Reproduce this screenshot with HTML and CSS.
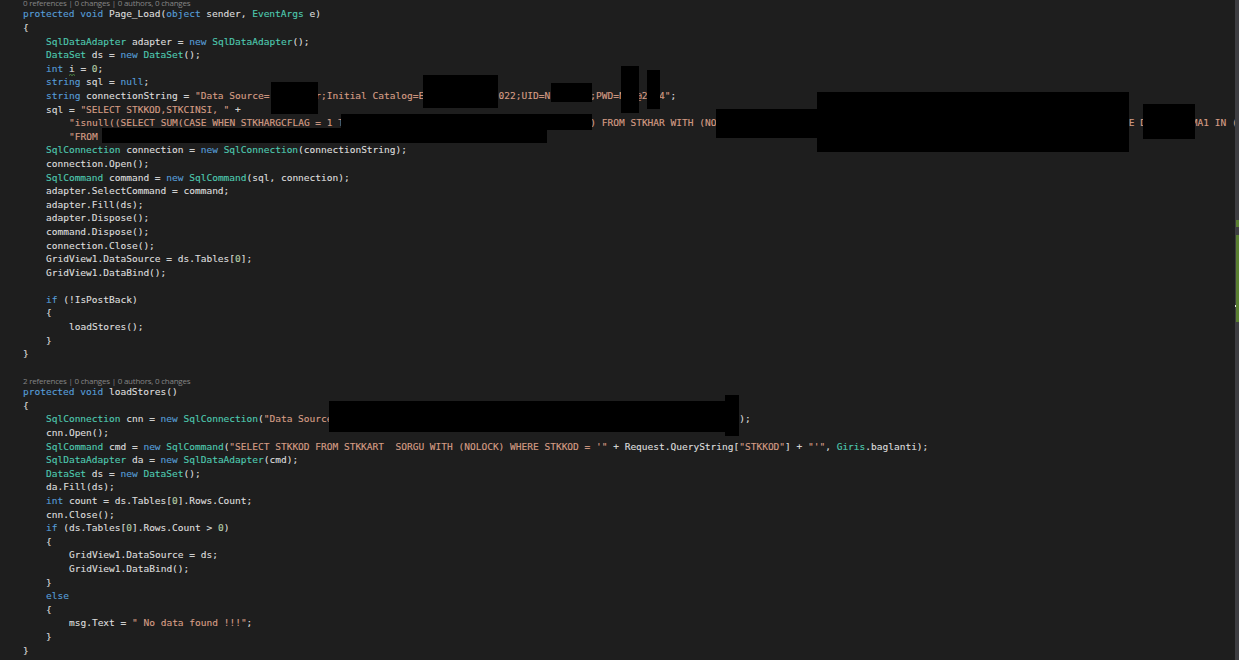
FILE: index.html
```html
<!DOCTYPE html>
<html lang="en">
<head>
<meta charset="utf-8">
<title>Code editor</title>
<link rel="stylesheet" href="styles.css">
</head>
<body>
<main class="window">
<div class="editor">
<div class="lens lens-top">0 references | 0 changes | 0 authors, 0 changes</div>
<div class="ln"><span class="k">protected</span> <span class="k">void</span> Page_Load(<span class="k">object</span> sender, <span class="t">EventArgs</span> e)</div>
<div class="ln">{</div>
<div class="ln i1"><span class="t">SqlDataAdapter</span> adapter = <span class="k">new</span> <span class="t">SqlDataAdapter</span>();</div>
<div class="ln i1"><span class="t">DataSet</span> ds = <span class="k">new</span> <span class="t">DataSet</span>();</div>
<div class="ln i1"><span class="k">int</span> <span class="sq">i<svg class="squiggle" viewBox="0 0 6 2" aria-hidden="true"><path d="M0 1.5 1.5 .5 3 1.5 4.5 .5 6 1.5"/></svg></span> = <span class="n">0</span>;</div>
<div class="ln i1"><span class="k">string</span> sql = <span class="k">null</span>;</div>
<div class="ln i1"><span class="k">string</span> connectionString = <span class="s">"Data Source=        r;Initial Catalog=E             022;UID=N       ;PWD=N  @2  4"</span>;</div>
<div class="ln i1">sql = <span class="s">"SELECT STKKOD,STKCINSI, "</span> +</div>
<div class="ln i2"><span class="s">"isnull((SELECT SUM(CASE WHEN STKHARGCFLAG = 1 T</span><span class="gap g43"></span><span class="s">) FROM STKHAR WITH (NO</span><span class="gap g72"></span><span class="s">E D</span><span class="gap g8"></span><span class="s">MA1 IN (</span></div>
<div class="ln i2"><span class="s">"FROM</span></div>
<div class="ln i1"><span class="t">SqlConnection</span> connection = <span class="k">new</span> <span class="t">SqlConnection</span>(connectionString);</div>
<div class="ln i1">connection.Open();</div>
<div class="ln i1"><span class="t">SqlCommand</span> command = <span class="k">new</span> <span class="t">SqlCommand</span>(sql, connection);</div>
<div class="ln i1">adapter.SelectCommand = command;</div>
<div class="ln i1">adapter.Fill(ds);</div>
<div class="ln i1">adapter.Dispose();</div>
<div class="ln i1">command.Dispose();</div>
<div class="ln i1">connection.Close();</div>
<div class="ln i1">GridView1.DataSource = ds.Tables[<span class="n">0</span>];</div>
<div class="ln i1">GridView1.DataBind();</div>
<div class="ln"> </div>
<div class="ln i1"><span class="k">if</span> (!IsPostBack)</div>
<div class="ln i1">{</div>
<div class="ln i2">loadStores();</div>
<div class="ln i1">}</div>
<div class="ln">}</div>
<div class="ln"> </div>
<div class="lens">2 references | 0 changes | 0 authors, 0 changes</div>
<div class="ln"><span class="k">protected</span> <span class="k">void</span> loadStores()</div>
<div class="ln">{</div>
<div class="ln i1"><span class="t">SqlConnection</span> cnn = <span class="k">new</span> <span class="t">SqlConnection</span>(<span class="s">"Data Source</span><span class="gap g71"></span>);</div>
<div class="ln i1">cnn.Open();</div>
<div class="ln i1"><span class="t">SqlCommand</span> cmd = <span class="k">new</span> <span class="t">SqlCommand</span>(<span class="s">"SELECT STKKOD FROM STKKART  SORGU WITH (NOLOCK) WHERE STKKOD = '"</span> + Request.QueryString[<span class="s">"STKKOD"</span>] + <span class="s">"'"</span>, <span class="t">Giris</span>.baglanti);</div>
<div class="ln i1"><span class="t">SqlDataAdapter</span> da = <span class="k">new</span> <span class="t">SqlDataAdapter</span>(cmd);</div>
<div class="ln i1"><span class="t">DataSet</span> ds = <span class="k">new</span> <span class="t">DataSet</span>();</div>
<div class="ln i1">da.Fill(ds);</div>
<div class="ln i1"><span class="k">int</span> count = ds.Tables[<span class="n">0</span>].Rows.Count;</div>
<div class="ln i1">cnn.Close();</div>
<div class="ln i1"><span class="k">if</span> (ds.Tables[<span class="n">0</span>].Rows.Count &gt; <span class="n">0</span>)</div>
<div class="ln i1">{</div>
<div class="ln i2">GridView1.DataSource = ds;</div>
<div class="ln i2">GridView1.DataBind();</div>
<div class="ln i1">}</div>
<div class="ln i1"><span class="k">else</span></div>
<div class="ln i1">{</div>
<div class="ln i2">msg.Text = <span class="s">" No data found !!!"</span>;</div>
<div class="ln i1">}</div>
<div class="ln">}</div>
</div>
<aside class="scrollbar">
<span class="mark mark-a"></span>
<span class="mark mark-b"></span>
<span class="tick"></span>
</aside>
<span class="redact r1"></span>
<span class="redact r2"></span>
<span class="redact r3"></span>
<span class="redact r4"></span>
<span class="redact r5"></span>
<span class="redact r6"></span>
<span class="redact r7"></span>
<span class="redact r8"></span>
<span class="redact r9"></span>
<span class="redact r10"></span>
<span class="redact r11"></span>
<span class="redact r12"></span>
</main>
</body>
</html>
```
FILE: styles.css
```css
html, body {
  margin: 0;
  padding: 0;
  height: 100%;
  background: #1e1e1e;
}

.window {
  position: relative;
  display: flex;
  width: 1239px;
  height: 660px;
  overflow: hidden;
  background: #1e1e1e;
}

.editor {
  flex: 1;
  min-width: 0;
  margin-top: -3.4px;
  padding-left: 23px;
  overflow: hidden;
  font-family: "DejaVu Sans Mono", monospace;
  font-size: 9.52px;
  color: #dcdcdc;
  -webkit-text-stroke: 0.12px currentColor;
}

.ln {
  height: 13.6px;
  line-height: 13.6px;
  white-space: pre;
}

.i1 { padding-left: 23px; }
.i2 { padding-left: 46px; }

.k { color: #569cd6; }
.t { color: #4ec9b0; }
.s { color: #d69d85; }
.n { color: #b5cea8; }

.gap { display: inline-block; }
.g8 { width: 8ch; }
.g43 { width: 43ch; }
.g71 { width: 71ch; }
.g72 { width: 72ch; }

.sq {
  position: relative;
}

.squiggle {
  position: absolute;
  left: 0;
  top: 100%;
  width: 6px;
  height: 2px;
  overflow: visible;
}

.squiggle path {
  fill: none;
  stroke: #57a64a;
  stroke-width: 0.8;
}

.lens {
  height: 10.8px;
  line-height: 13px;
  font-family: "Open Sans", sans-serif;
  font-size: 8px;
  letter-spacing: -0.23px;
  color: #858585;
  white-space: pre;
  -webkit-text-stroke: 0;
}

.lens-top {
  line-height: 12px;
}

.scrollbar {
  position: relative;
  flex: 0 0 4px;
  background: #3e3e42;
}

.mark {
  position: absolute;
  left: 1px;
  right: 0;
  background: #5a7f32;
}

.mark-a { top: 220px; height: 7px; }
.mark-b { top: 235px; height: 87px; }

.tick {
  position: absolute;
  top: 305px;
  left: 0;
  width: 1px;
  height: 2px;
  background: #e8e8e8;
}

.redact {
  position: absolute;
  background: #000;
}

.r1 { left: 271px; top: 82px; width: 47px; height: 32px; }
.r2 { left: 423px; top: 75px; width: 75px; height: 33px; }
.r3 { left: 551px; top: 83px; width: 41px; height: 19px; }
.r4 { left: 621px; top: 66px; width: 18px; height: 47px; }
.r5 { left: 647px; top: 70px; width: 13px; height: 39px; }
.r6 { left: 341px; top: 114px; width: 251px; height: 16px; }
.r7 { left: 102px; top: 128px; width: 445px; height: 15px; }
.r8 { left: 716px; top: 109px; width: 101px; height: 29px; }
.r9 { left: 817px; top: 92px; width: 312px; height: 60px; }
.r10 { left: 1143px; top: 104px; width: 52px; height: 35px; }
.r11 { left: 329px; top: 401px; width: 396px; height: 31px; }
.r12 { left: 725px; top: 395px; width: 14px; height: 41px; }
```
